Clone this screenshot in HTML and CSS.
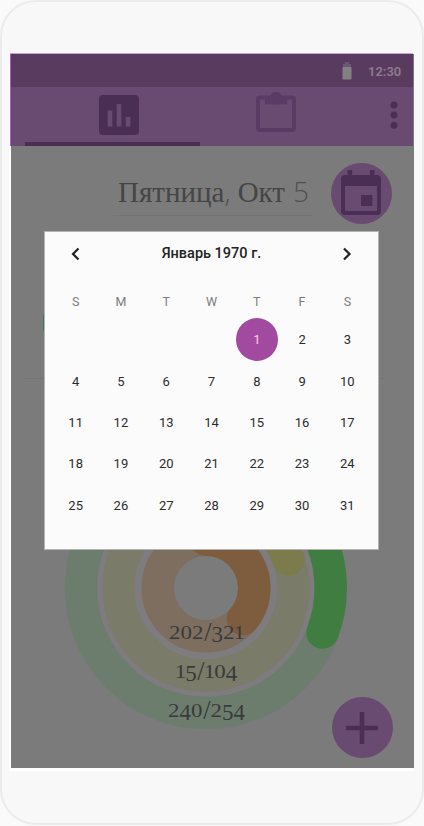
FILE: index.html
```html
<!DOCTYPE html>
<html lang="ru">
<head>
<meta charset="utf-8">
<title>Календарь</title>
<link rel="stylesheet" href="styles.css">
</head>
<body>
<div class="phone">
  <div class="screen">
    <header class="top">
      <div class="status">
        <svg class="battery" width="10" height="18" viewBox="0 0 10 18"><path fill="#6f5576" d="M3 0h4v2h2v4H1V2h2z"/><rect x=".5" y="5" width="9" height="12.5" rx="1" fill="#838083"/></svg>
        <span class="clock">12:30</span>
      </div>
      <nav class="tabs">
        <div class="tab active">
          <svg width="40" height="40" viewBox="0 0 40 40"><rect width="40" height="40" rx="4" fill="#4b2e54"/><path fill="#694a70" d="M8.7 15.5h4.6v16H8.7zM17.7 9h4.6v22.5h-4.6zM26.8 22h4.6v9.5h-4.6z"/></svg>
        </div>
        <div class="tab">
          <svg width="40" height="40" viewBox="0 0 40 40"><rect x="2" y="5.5" width="36" height="32.5" rx="2" fill="none" stroke="#5a3b66" stroke-width="4"/><path fill="#5a3b66" fill-rule="evenodd" d="M9 5h5c1-7 11-7 12 0h5v7.500H9zM20 3.700a1.900 1.900 0 1 0 0 3.800 1.900 1.900 0 0 0 0-3.800z"/></svg>
        </div>
        <svg class="more" width="8" height="28" viewBox="0 0 8 28"><g fill="#4b2e54"><circle cx="4" cy="4" r="3.5"/><circle cx="4" cy="14" r="3.5"/><circle cx="4" cy="24.2" r="3.5"/></g></svg>
      </nav>
    </header>

    <div class="daterow">
      <div class="date"><span class="words">Пятница<span class="thin">,</span> Окт</span><span class="thin num">5</span></div>
      <div class="round">
        <svg width="40" height="46" viewBox="0 0 40 46"><path fill="#4b2e54" fill-rule="evenodd" d="M6.500 0h4.700v5h17.600V0h4.700v5H36a4 4 0 0 1 4 4v32a4 4 0 0 1-4 4H4a4 4 0 0 1-4-4V9a4 4 0 0 1 4-4h2.500zM4 16v25h32V16z"/><rect x="20" y="25" width="11.300" height="11" fill="#4b2e54"/></svg>
      </div>
    </div>
    <div class="divider"></div>

    <section class="chart">
      <svg class="rings" width="284" height="284" viewBox="-142 -142 284 284">
        <g fill="none" stroke-width="32.500" stroke-linecap="round">
          <circle r="106" stroke="#7f7c80" stroke-width="7"/>
          <circle r="68" stroke="#7f7c80" stroke-width="8"/>
          <circle r="125" stroke="#6c7d6e"/>
          <circle r="87.500" stroke="#7b7b69"/>
          <circle r="48.300" stroke="#7e6e5f"/>
          <path stroke="#407d40" d="M0-125A125 125 0 0 1 116.500 44.500"/>
          <path stroke="#7c7b4b" d="M0-87.500A87.500 87.500 0 0 1 82.500-28.500"/>
          <path stroke="#7e5d3f" d="M0-48.300A48.300 48.300 0 0 1 37 31"/>
        </g>
      </svg>
      <div class="totals">
        <p><i class="x">2</i><i class="x">0</i><i class="x">2</i><i class="s">/</i><i class="d">3</i><i class="x">2</i><i class="x one">1</i></p>
        <p><i class="x one">1</i><i class="d">5</i><i class="s">/</i><i class="x one">1</i><i class="x">0</i><i class="d">4</i></p>
        <p><i class="x">2</i><i class="d">4</i><i class="x">0</i><i class="s">/</i><i class="x">2</i><i class="d">5</i><i class="d">4</i></p>
      </div>
      <div class="round add">
        <svg width="32" height="32" viewBox="0 0 32 32"><path fill="#4b2e54" d="M13.700 0h4.600v13.700H32v4.600H18.300V32h-4.600V18.300H0v-4.600h13.700z"/></svg>
      </div>
    </section>
    <div class="peek"></div>

    <div class="dialog">
      <div class="month">
        <svg width="10" height="14" viewBox="0 0 10 14"><path d="M7.500 1.500 2 7l5.500 5.500" fill="none" stroke="#222" stroke-width="2.200"/></svg>
        <h1>Январь 1970 г.</h1>
        <svg width="10" height="14" viewBox="0 0 10 14"><path d="M2 1.500 7.500 7l-5.500 5.500" fill="none" stroke="#222" stroke-width="2.200"/></svg>
      </div>
      <div class="week"><span>S</span><span>M</span><span>T</span><span>W</span><span>T</span><span>F</span><span>S</span></div>
      <div class="days">
        <span class="first">1</span><span>2</span><span>3</span>
        <span>4</span><span>5</span><span>6</span><span>7</span><span>8</span><span>9</span><span>10</span>
        <span>11</span><span>12</span><span>13</span><span>14</span><span>15</span><span>16</span><span>17</span>
        <span>18</span><span>19</span><span>20</span><span>21</span><span>22</span><span>23</span><span>24</span>
        <span>25</span><span>26</span><span>27</span><span>28</span><span>29</span><span>30</span><span>31</span>
      </div>
    </div>
  </div>
</div>
</body>
</html>
```
FILE: styles.css
```css
* { box-sizing: border-box; }
body { margin: 0; background: #fafafa; overflow: hidden; font-family: Roboto, sans-serif; }
.phone {
  width: 424px; height: 825px; padding: 52px 8px 0 7px;
  border: 2px solid #ebebeb;
  border-radius: 36px; background: #f8f8f8;
}
.screen {
  position: relative; width: 405px; height: 718px; margin-top: -1px;
  background: #7b7b7b; border: 2px solid #fff; border-width: 1px 0 3px 2px;
}
.top { margin-left: -1px; width: 403px; border-left: 1px solid #b257cf; box-shadow: 0 -1px #c9a5d3; }
.status {
  height: 33px; background: #5a3b60; display: flex; align-items: center;
  justify-content: flex-end; padding-right: 11px; gap: 16px;
}
.clock { font-size: 13px; font-weight: 600; color: #8b7d8e; padding-top: 2px; width: 34px; white-space: nowrap; }
.tabs {
  height: 59px; background: #694a70; display: flex; padding-left: 14px; align-items: stretch;
}
.tab { width: 175px; height: 59px; display: flex; justify-content: center; padding: 8px 0 0 13px; }
.tab:nth-child(2) { width: 152px; padding: 5px 0 0; }
.active { border-bottom: 4px solid #4b2e54; }
.more { margin: 14px 0 0 38px; }

.daterow { height: 86px; display: flex; padding: 16px 0 0 102px; }
.date { width: 200px; height: 54px; border-bottom: 1px solid #737373; display: flex; color: #454545; padding: 11px 0 0 5px; line-height: 36px; }
.words { font-family: "Liberation Serif", serif; font-size: 29px; white-space: nowrap; width: 175px; }
.thin { font-family: "Open Sans", sans-serif; font-weight: 300; font-size: 28px; color: #505050; }
.round { width: 61px; height: 61px; margin-left: 18px; border-radius: 50%; background: #694a70; display: flex; align-items: center; justify-content: center; }
.daterow .round { margin-top: 1px; }
.daterow svg { margin: -2px 0 0 -1px; }
.divider { height: 147px; margin: 0 29px 0 14px; border-bottom: 1px solid #747474; }

.chart { display: grid; grid-template-columns: 284px 1fr; padding: 67px 0 0 53px; }
.rings { grid-area: 1 / 1; }
.totals { grid-area: 1 / 1; padding: 171px 0 0 1px; text-align: center; font-family: "Liberation Serif", serif; font-size: 23px; color: #3a3a3a; }
.totals p { margin: 0; height: 39px; line-height: 30px; display: flex; justify-content: center; }
.totals i { font-style: normal; width: 11.500px; display: flex; justify-content: center; transform-origin: 50% 23px; }
.totals .x { transform: scale(1, .78); }
.totals .one { width: 9.500px; }
.totals .d { transform: translateY(3px); }
.totals .s { width: 8px; transform: translateY(2px) scale(1.15, 1.15); }
.add { grid-area: 1 / 2; align-self: end; margin: 0 0 -24px -16px; }
.add svg { margin-left: -1px; }
.peek { position: absolute; left: 32px; top: 255px; width: 28px; height: 28px; border-radius: 30%; background: #2f7f52; }

.dialog { position: absolute; left: 33px; top: 177px; width: 335px; height: 319px; background: #fbfbfb; border: 1px solid #b3b3b3; padding: 0 8px; }
.month { height: 43px; display: flex; justify-content: space-between; align-items: center; padding: 0 18px; }
.month h1 { margin: 0; font-size: 14.500px; font-weight: 500; color: #222; white-space: nowrap; }
.week, .days { display: grid; grid-template-columns: repeat(7, 1fr); text-align: center; }
.week { height: 44.300px; align-items: end; color: #7b7b7b; font-size: 12.500px; padding-bottom: 9.500px; line-height: 16px; }
.days { grid-auto-rows: 41.300px; align-items: center; font-size: 13px; color: #2c2c2c; }
.first { grid-column: 5; width: 42px; height: 43px; line-height: 43px; border-radius: 50%; background: #a249a0; color: #ffd0e0; justify-self: center; }
```
